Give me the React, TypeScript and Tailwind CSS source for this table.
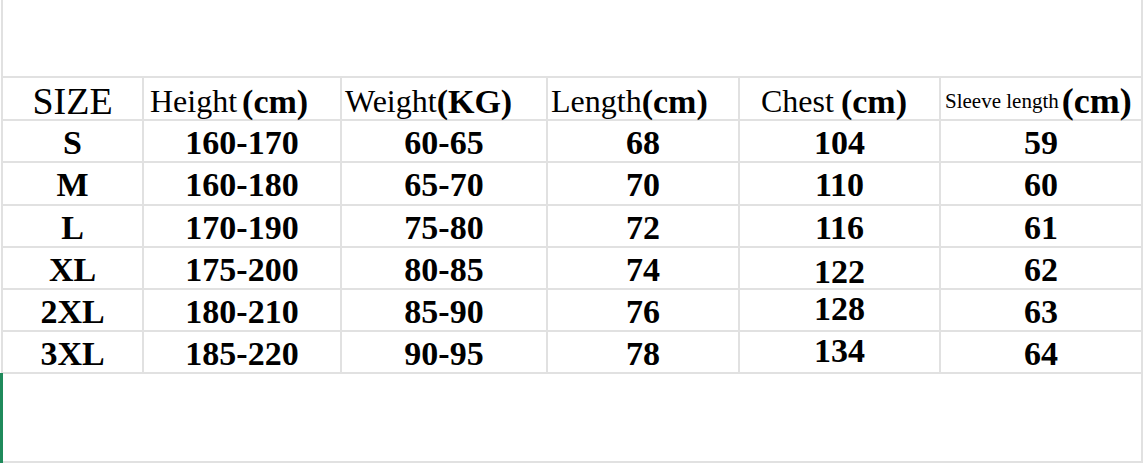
import React from 'react';

const rows = [
  { size: 'S', height: '160-170', weight: '60-65', length: '68', chest: '104', sleeve: '59', chestFix: 'pt-[3px]' },
  { size: 'M', height: '160-180', weight: '65-70', length: '70', chest: '110', sleeve: '60', chestFix: 'pt-[3px]' },
  { size: 'L', height: '170-190', weight: '75-80', length: '72', chest: '116', sleeve: '61', chestFix: 'pt-[3px]' },
  { size: 'XL', height: '175-200', weight: '80-85', length: '74', chest: '122', sleeve: '62', chestFix: 'pt-[7px]' },
  { size: '2XL', height: '180-210', weight: '85-90', length: '76', chest: '128', sleeve: '63', chestFix: 'pb-[3px]' },
  { size: '3XL', height: '185-220', weight: '90-95', length: '78', chest: '134', sleeve: '64', chestFix: 'pb-[3px]' },
];

const cell = 'bg-white flex items-center justify-center text-[34px] font-bold leading-[1.15] text-black';

export default function App() {
  return (
    <div className="w-[1146px] h-[464px] bg-white overflow-hidden font-['Liberation_Serif','Times_New_Roman',serif] text-black">
      <div className="ml-[1px] w-fit grid grid-cols-[139px_196px_204px_190px_199px_200px] grid-rows-[76px_41px_40px_41px_40px_40px_40px_40px_87px] gap-[2px] bg-[#e1e1e1] px-[2px] pb-[2px]">
        {/* empty merged area above the table */}
        <div className="col-span-6 bg-white" />

        {/* header */}
        <div className="bg-white flex items-center justify-center pt-[6px] text-[38px] leading-[1.15] whitespace-nowrap">SIZE</div>
        <div className="bg-white flex items-center pl-[6px] pt-[6px] text-[32px] leading-[1.15] whitespace-nowrap">
          Height<span className="ml-[5px] text-[34px] font-bold">(cm)</span>
        </div>
        <div className="bg-white flex items-center pl-[3px] pt-[6px] text-[32px] leading-[1.15] whitespace-nowrap">
          Weight<span className="text-[34px] font-bold">(KG)</span>
        </div>
        <div className="bg-white flex items-center pl-[3px] pt-[6px] text-[32px] leading-[1.15] whitespace-nowrap">
          Length<span className="text-[34px] font-bold">(cm)</span>
        </div>
        <div className="bg-white flex items-center pl-[21px] pt-[6px] text-[32px] leading-[1.15] whitespace-nowrap">
          Chest<span className="ml-[7px] text-[34px] font-bold">(cm)</span>
        </div>
        <div className="bg-white flex items-center pl-[4px] pt-[6px] text-[21px] leading-[1.15] whitespace-nowrap">
          Sleeve length<span className="ml-[3px] text-[36px] font-bold">(cm)</span>
        </div>

        {/* data rows */}
        {rows.map((r) => (
          <React.Fragment key={r.size}>
            <div className={`${cell} pt-[3px]`}>{r.size}</div>
            <div className={`${cell} pt-[3px]`}>{r.height}</div>
            <div className={`${cell} pt-[3px]`}>{r.weight}</div>
            <div className={`${cell} pt-[3px]`}>{r.length}</div>
            <div className={`${cell} ${r.chestFix}`}>{r.chest}</div>
            <div className={`${cell} pt-[3px]`}>{r.sleeve}</div>
          </React.Fragment>
        ))}

        {/* empty merged area below, with the selected-cell marker */}
        <div className="col-span-6 bg-white relative">
          <div className="absolute left-[-3px] top-[-1px] bottom-[-2px] w-[3px] bg-[#1f8a5b]" />
        </div>
      </div>
    </div>
  );
}
